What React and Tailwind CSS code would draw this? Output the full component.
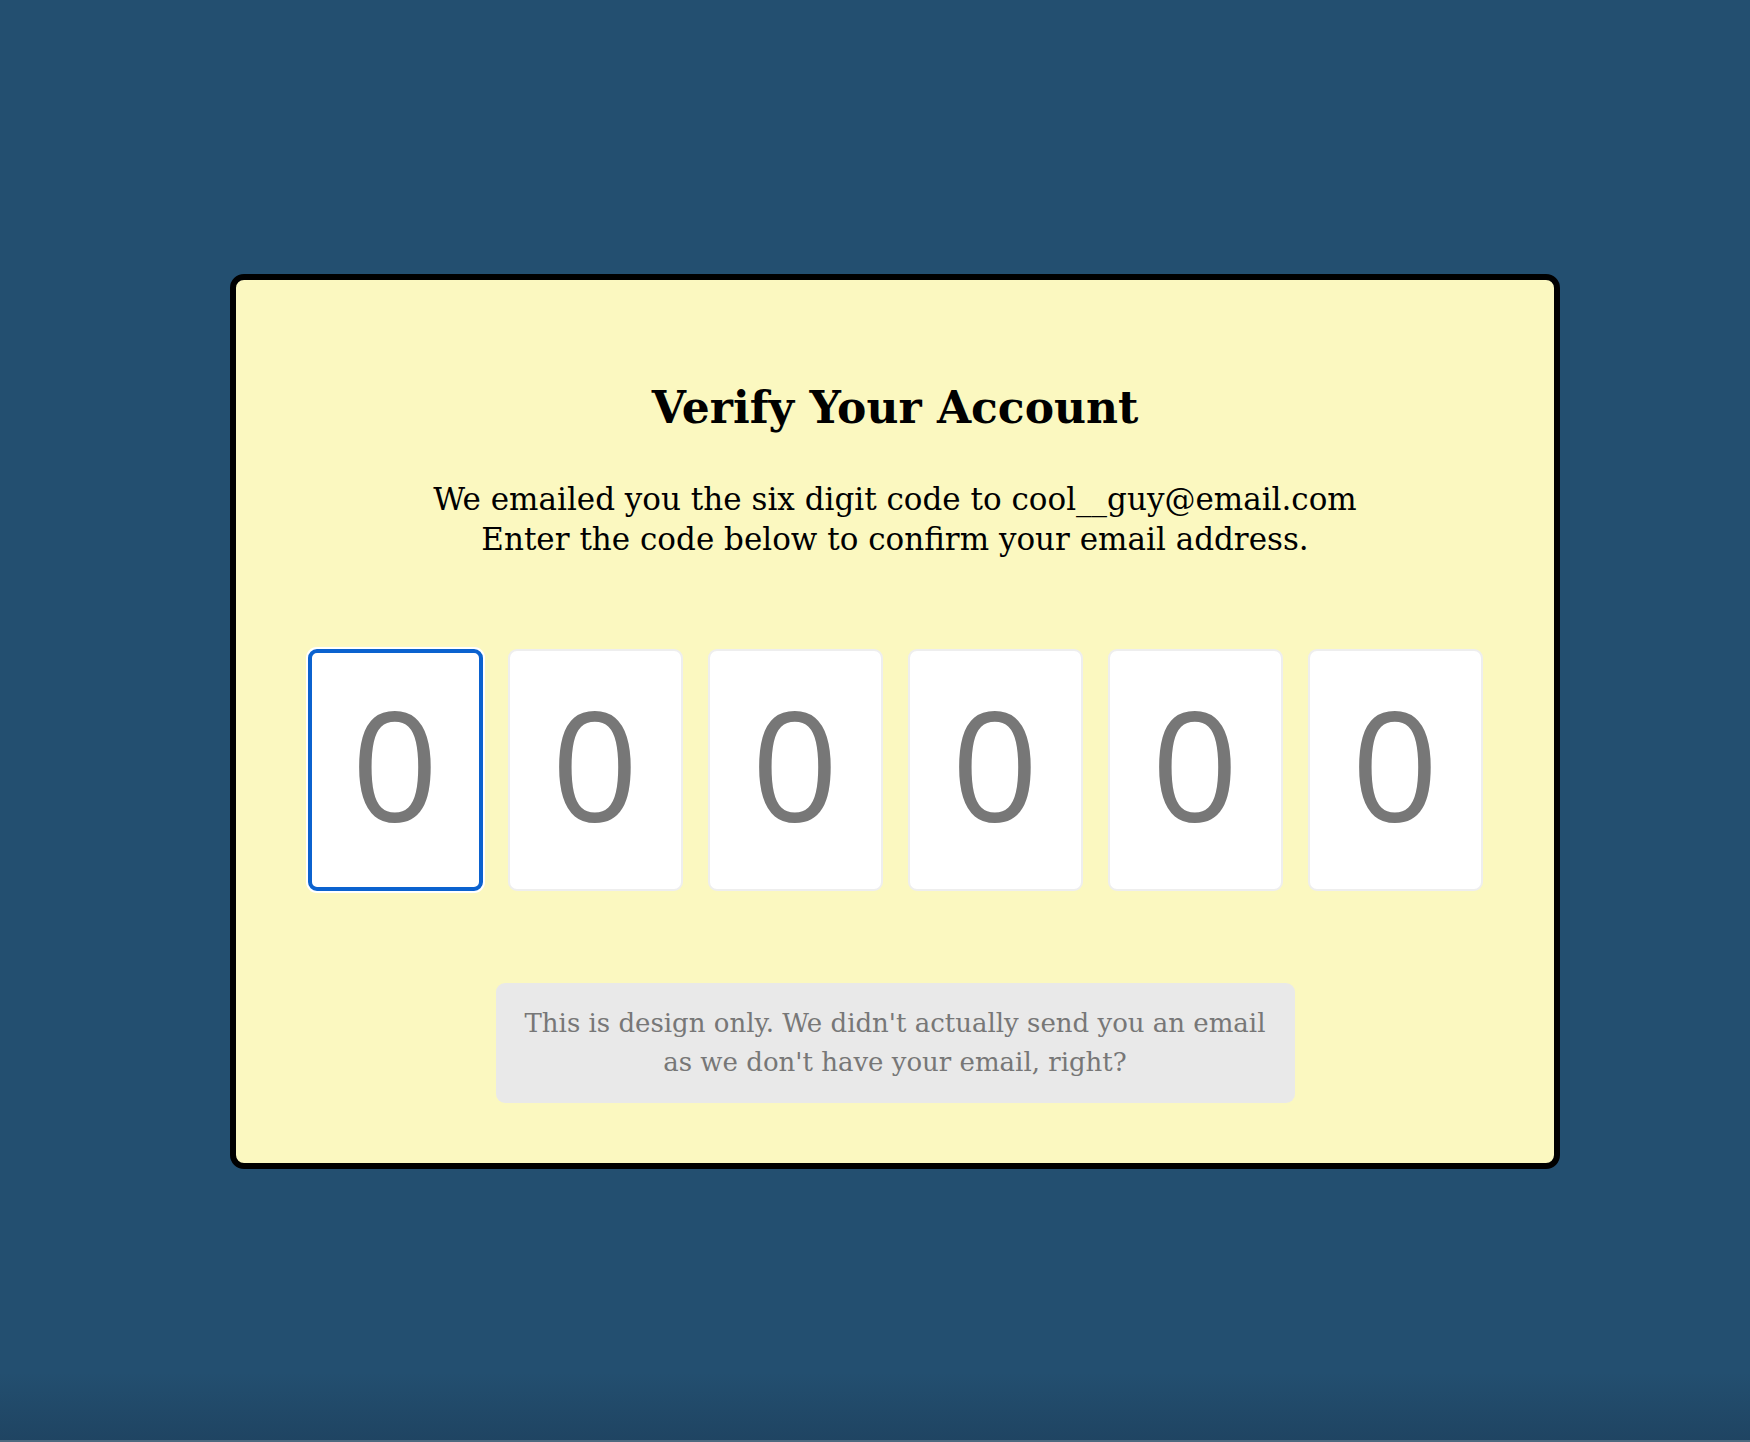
const DIGITS = [0, 1, 2, 3, 4, 5]

export default function App() {
  return (
    <div className="relative min-h-screen h-[1442px] bg-[#234f70] flex items-center justify-center pl-[40px]">
      {/* bottom shading */}
      <div className="absolute left-0 right-0 bottom-0 h-[70px] bg-gradient-to-b from-transparent to-[#1f4462]" />
      <div className="absolute left-0 right-0 bottom-0 h-[2px] bg-[#4d6a80]" />

      <div
        className="relative w-[1330px] h-[895px] bg-[#fbf8c0] border-[6px] border-black rounded-[14px] flex flex-col items-center text-black"
        style={{ fontFamily: '"DejaVu Serif", "Liberation Serif", serif' }}
      >
        <h1 className="mt-[100px] text-[44px] leading-[56px] font-bold">Verify Your Account</h1>

        <div className="mt-[43px] text-center text-[31px] leading-[40px]">
          <p>We emailed you the six digit code to cool__guy@email.com</p>
          <p>Enter the code below to confirm your email address.</p>
        </div>

        {/* Code inputs */}
        <div className="mt-[90px] flex gap-[25px]">
          {DIGITS.map((d) => (
            <div
              key={d}
              className={`w-[175px] h-[242px] bg-white rounded-[9px] flex items-center justify-center pb-[12px] ${
                d === 0
                  ? 'border-[4px] border-[#0b62cf] ring-2 ring-white'
                  : 'border-2 border-[#eeeeee]'
              }`}
            >
              <span
                className="text-[152px] leading-none text-[#777777]"
                style={{ fontFamily: '"Open Sans", "Noto Sans", sans-serif' }}
              >
                0
              </span>
            </div>
          ))}
        </div>

        {/* Note */}
        <div className="mt-[92px] w-[799px] h-[120px] bg-[#e9e9e9] rounded-[9px] flex flex-col items-center justify-center text-[#777777] text-[26px] leading-[39px]">
          <p>This is design only. We didn't actually send you an email</p>
          <p>as we don't have your email, right?</p>
        </div>
      </div>
    </div>
  )
}
